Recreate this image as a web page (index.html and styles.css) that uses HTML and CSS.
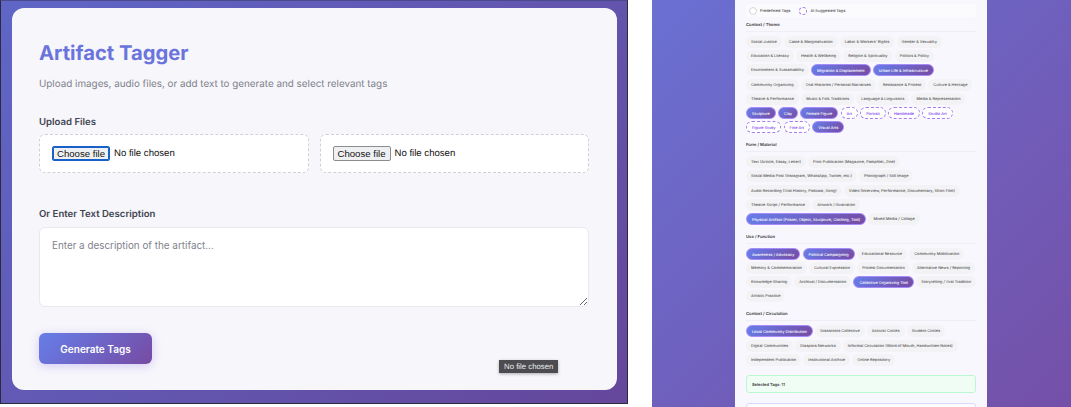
FILE: index.html
```html
<!DOCTYPE html>
<html lang="en">

<head>
    <meta charset="UTF-8">
    <meta name="viewport" content="width=device-width, initial-scale=1.0">
    <title>Artifact Tagger</title>
    <link rel="stylesheet" href="styles.css">
</head>

<body>
    <div class="shot shot-upload">
        <div class="upload-card">
            <h1>Artifact Tagger</h1>
            <p class="subtitle">Upload images, audio files, or add text to generate and select relevant tags</p>

            <label class="field-label">Upload Files</label>
            <div class="file-row">
                <div class="file-box">
                    <button type="button" class="file-btn focused">Choose file</button>
                    <span class="file-name">No file chosen</span>
                </div>
                <div class="file-box">
                    <button type="button" class="file-btn">Choose file</button>
                    <span class="file-name">No file chosen</span>
                </div>
            </div>

            <label class="field-label text-label" for="description">Or Enter Text Description</label>
            <textarea id="description" placeholder="Enter a description of the artifact..."></textarea>

            <button type="button" class="generate-btn">Generate Tags</button>

            <!-- native tooltip caught in the screenshot -->
            <span class="tooltip">No file chosen</span>
        </div>
    </div>

    <div class="shot shot-tags">
        <div class="tags-card">
            <div class="legend">
                <span class="legend-item"><span class="dot"></span>Predefined Tags</span>
                <span class="legend-item"><span class="dot dot-ai"></span>AI Suggested Tags</span>
            </div>

            <h3>Context / Theme</h3>
            <div class="tags">
                <div class="tag-row">
                    <span class="tag">Social Justice</span>
                    <span class="tag">Caste &amp; Marginalization</span>
                    <span class="tag">Labor &amp; Workers' Rights</span>
                    <span class="tag">Gender &amp; Sexuality</span>
                </div>
                <div class="tag-row">
                    <span class="tag">Education &amp; Literacy</span>
                    <span class="tag">Health &amp; Wellbeing</span>
                    <span class="tag">Religion &amp; Spirituality</span>
                    <span class="tag">Politics &amp; Policy</span>
                </div>
                <div class="tag-row">
                    <span class="tag">Environment &amp; Sustainability</span>
                    <span class="tag selected">Migration &amp; Displacement</span>
                    <span class="tag selected">Urban Life &amp; Infrastructure</span>
                </div>
                <div class="tag-row">
                    <span class="tag">Community Organizing</span>
                    <span class="tag">Oral Histories / Personal Narratives</span>
                    <span class="tag">Resistance &amp; Protest</span>
                    <span class="tag">Culture &amp; Heritage</span>
                </div>
                <div class="tag-row">
                    <span class="tag">Theatre &amp; Performance</span>
                    <span class="tag">Music &amp; Folk Traditions</span>
                    <span class="tag">Language &amp; Linguistics</span>
                    <span class="tag">Media &amp; Representation</span>
                </div>
                <div class="tag-row">
                    <span class="tag selected">Sculpture</span>
                    <span class="tag selected">Clay</span>
                    <span class="tag selected">Female Figure</span>
                    <span class="tag ai">Art</span>
                    <span class="tag ai">Portrait</span>
                    <span class="tag ai">Handmade</span>
                    <span class="tag ai">Studio Art</span>
                </div>
                <div class="tag-row">
                    <span class="tag ai">Figure Study</span>
                    <span class="tag ai">Fine Art</span>
                    <span class="tag selected">Visual Arts</span>
                </div>
            </div>

            <h3>Form / Material</h3>
            <div class="tags">
                <div class="tag-row">
                    <span class="tag">Text (Article, Essay, Letter)</span>
                    <span class="tag">Print Publication (Magazine, Pamphlet, Zine)</span>
                </div>
                <div class="tag-row">
                    <span class="tag">Social Media Post (Instagram, WhatsApp, Twitter, etc.)</span>
                    <span class="tag">Photograph / Still Image</span>
                </div>
                <div class="tag-row">
                    <span class="tag">Audio Recording (Oral History, Podcast, Song)</span>
                    <span class="tag">Video (Interview, Performance, Documentary, Short Film)</span>
                </div>
                <div class="tag-row">
                    <span class="tag">Theatre Script / Performance</span>
                    <span class="tag">Artwork / Illustration</span>
                </div>
                <div class="tag-row">
                    <span class="tag selected">Physical Artifact (Poster, Object, Sculpture, Clothing, Tool)</span>
                    <span class="tag">Mixed Media / Collage</span>
                </div>
            </div>

            <h3>Use / Function</h3>
            <div class="tags">
                <div class="tag-row">
                    <span class="tag selected">Awareness / Advocacy</span>
                    <span class="tag selected">Political Campaigning</span>
                    <span class="tag">Educational Resource</span>
                    <span class="tag">Community Mobilization</span>
                </div>
                <div class="tag-row">
                    <span class="tag">Memory &amp; Commemoration</span>
                    <span class="tag">Cultural Expression</span>
                    <span class="tag">Protest Documentation</span>
                    <span class="tag">Alternative News / Reporting</span>
                </div>
                <div class="tag-row">
                    <span class="tag">Knowledge Sharing</span>
                    <span class="tag">Archival / Documentation</span>
                    <span class="tag selected">Collective Organizing Tool</span>
                    <span class="tag">Storytelling / Oral Tradition</span>
                </div>
                <div class="tag-row">
                    <span class="tag">Artistic Practice</span>
                </div>
            </div>

            <h3>Context / Circulation</h3>
            <div class="tags">
                <div class="tag-row">
                    <span class="tag selected">Local Community Distribution</span>
                    <span class="tag">Grassroots Collective</span>
                    <span class="tag">Activist Circles</span>
                    <span class="tag">Student Circles</span>
                </div>
                <div class="tag-row">
                    <span class="tag">Digital Communities</span>
                    <span class="tag">Diaspora Networks</span>
                    <span class="tag">Informal Circulation (Word of Mouth, Handwritten Notes)</span>
                </div>
                <div class="tag-row">
                    <span class="tag">Independent Publication</span>
                    <span class="tag">Institutional Archive</span>
                    <span class="tag">Online Repository</span>
                </div>
            </div>

            <div class="selected-box">Selected Tags: 11</div>
            <div class="next-box"></div>
        </div>
    </div>
</body>

</html>
```

FILE: styles.css
```css
html, body {
    margin: 0;
    padding: 0;
    height: 100%;
    overflow: hidden;
    background: #fff;
    font-family: Inter, "Liberation Sans", sans-serif;
    text-rendering: geometricPrecision;
}

body {
    display: flex;
    gap: 24px;
}

.shot {
    height: 100%;
    box-sizing: border-box;
    overflow: hidden;
}

/* Left screenshot */
.shot-upload {
    width: 628px;
    height: 404px;
    padding: 7px 10px 13px 11px;
    background: linear-gradient(135deg, #5f66c6, #65479b);
    border: 1px solid #2c2a3c;
    border-top-color: #4a4a8c;
}

.upload-card {
    position: relative;
    box-sizing: border-box;
    height: 100%;
    padding: 33px 28px 0 27px;
    background: #f6f6fb;
    border-radius: 12px;
}

h1 {
    margin: 0;
    font-size: 20.2px;
    line-height: 24px;
    font-weight: 700;
    color: #6a74dc;
}

.subtitle {
    margin: 12px 0 0;
    font-size: 9.85px;
    line-height: 14px;
    color: #7d8089;
}

.field-label {
    display: block;
    margin-top: 26px;
    margin-bottom: 5px;
    font-size: 9.6px;
    line-height: 12px;
    font-weight: 600;
    color: #3f4450;
}

.file-row {
    display: flex;
    gap: 11px;
}

.file-box {
    flex: 1;
    display: flex;
    align-items: center;
    gap: 4px;
    box-sizing: border-box;
    height: 39px;
    padding: 0 12px;
    background: #fff;
    border: 1px dashed #cfd0d6;
    border-radius: 6px;
}

.file-btn {
    box-sizing: border-box;
    width: 58px;
    height: 15px;
    padding: 0;
    font-family: "Liberation Sans", Arial, sans-serif;
    font-size: 9.6px;
    color: #111;
    background: #eff0f2;
    border: 1px solid #8b8c90;
    border-radius: 2px;
}

.file-btn.focused {
    border: 1px solid #1b5fc9;
    box-shadow: 0 0 0 1px #1b5fc9 inset;
}

.file-name {
    font-family: "Liberation Sans", Arial, sans-serif;
    font-size: 9.6px;
    color: #111;
}

.text-label {
    margin-top: 36px;
    margin-bottom: 6px;
}

textarea {
    display: block;
    box-sizing: border-box;
    width: 100%;
    height: 80px;
    padding: 11px 12px;
    font-family: Inter, "Liberation Sans", sans-serif;
    font-size: 9.87px;
    line-height: 12px;
    background: #fff;
    border: 1.5px solid #e8e8ee;
    border-radius: 6px;
}

textarea::placeholder {
    color: #7f828b;
}

.generate-btn {
    display: block;
    width: 113px;
    height: 31px;
    margin-top: 26px;
    padding: 0;
    font-family: Inter, "Liberation Sans", sans-serif;
    font-size: 10px;
    font-weight: 600;
    color: #fff;
    background: linear-gradient(135deg, #667eea, #764ba2);
    border: none;
    border-radius: 6px;
    box-shadow: 0 2px 10px rgba(140, 100, 230, 0.3);
}

.tooltip {
    position: absolute;
    left: 487px;
    top: 352px;
    padding: 0 5px;
    font-family: "Liberation Sans", Arial, sans-serif;
    font-size: 7.8px;
    line-height: 13px;
    color: #eee;
    background: #4b4b50;
    box-shadow: 0 1px 3px rgba(0, 0, 0, 0.3);
}

/* Right screenshot */
.shot-tags {
    flex: 1;
    padding: 0 84px 0 83px;
    background: linear-gradient(135deg, #6a70d2, #7450a8);
}

.tags-card {
    box-sizing: border-box;
    height: 100%;
    padding: 4px 11px 0;
    background: #f8f7fd;
}

.legend {
    display: flex;
    gap: 9px;
    height: 13px;
    align-items: center;
    padding: 0 3px;
    background: #fbfbfe;
    border-radius: 3px;
    font-size: 3.9px;
    font-weight: 500;
    color: #444;
}

.legend-item {
    display: flex;
    align-items: center;
    gap: 3px;
}

.dot {
    width: 6px;
    height: 6px;
    background: #fff;
    border: 0.5px solid #d6d6dc;
    border-radius: 50%;
}

.dot-ai {
    border: 0.5px dashed #a67cf0;
}

h3 {
    margin: 5px 0 4px;
    padding-bottom: 2px;
    font-size: 4.2px;
    line-height: 7px;
    font-weight: 600;
    color: #333;
    border-bottom: 0.5px solid #eeeef3;
}

.tags {
    display: flex;
    flex-direction: column;
    gap: 2.2px;
    margin-bottom: 9px;
}

.tag-row {
    display: flex;
    gap: 2.3px;
}

.tag {
    box-sizing: border-box;
    height: 12px;
    padding: 0 4.9px;
    font-size: 3.9px;
    line-height: 12px;
    font-weight: 500;
    white-space: nowrap;
    color: #555;
    background: #f3f3f6;
    border-radius: 6px;
}

.tag.selected {
    line-height: 11px;
    color: #fff;
    background: linear-gradient(135deg, #667eea, #764ba2);
    border: 0.5px solid #a78bfa;
}

.tag.ai {
    line-height: 11px;
    color: #7c3aed;
    background: #fff;
    border: 0.5px dashed #a67cf0;
}

.selected-box {
    box-sizing: border-box;
    height: 18px;
    margin-top: 3px;
    padding: 5px;
    font-size: 4px;
    line-height: 7px;
    font-weight: 600;
    color: #333;
    background: #f0fdf4;
    border: 0.5px solid #bbf7d0;
    border-radius: 3px;
}

.next-box {
    height: 30px;
    margin-top: 10px;
    background: #fdfcff;
    border: 0.5px solid #ddd6fe;
    border-radius: 3px;
}
```
